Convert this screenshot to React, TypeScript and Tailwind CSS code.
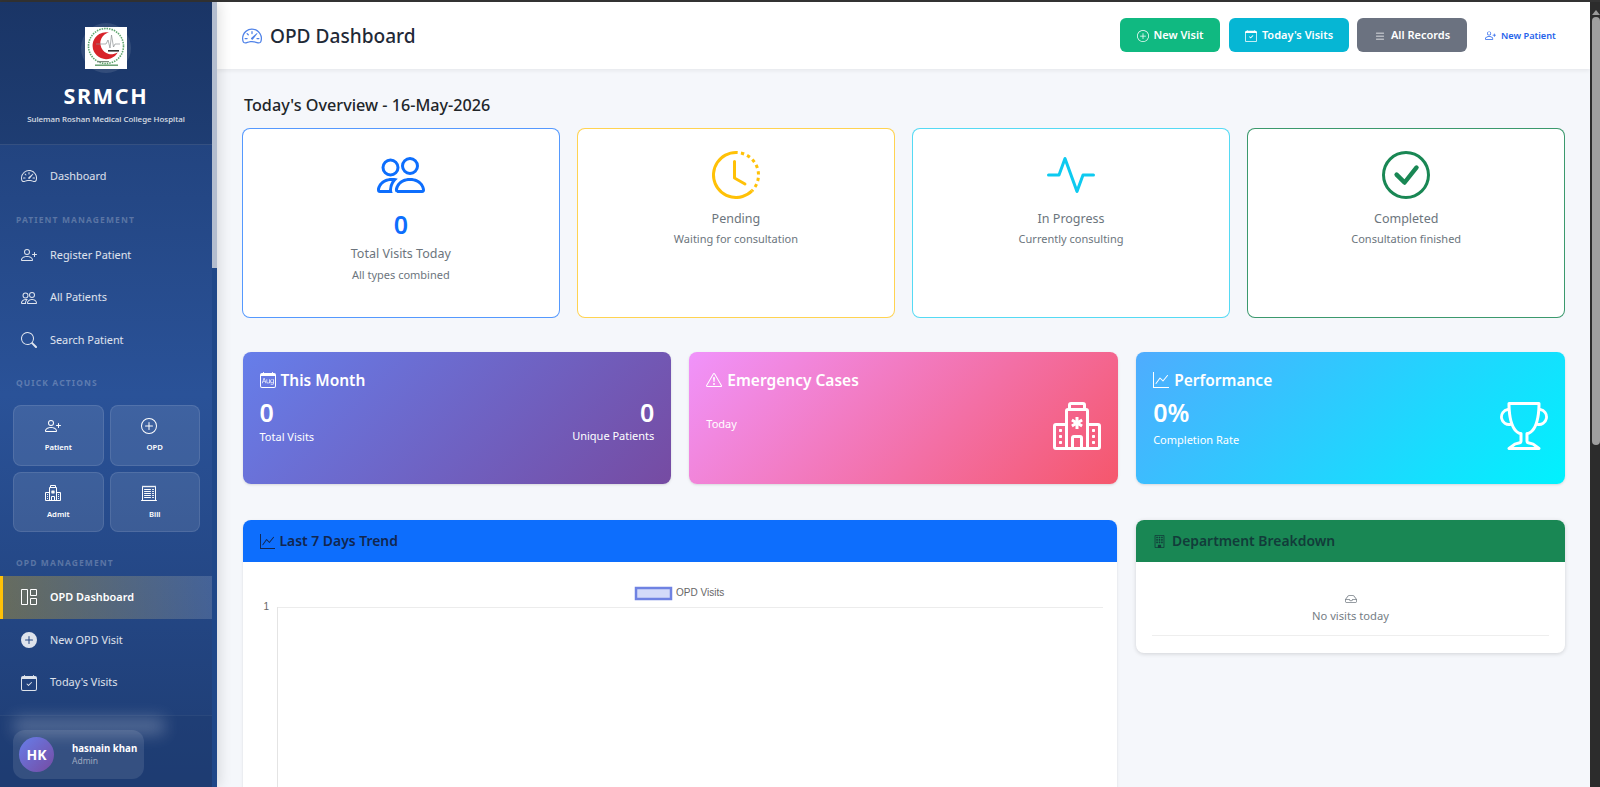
import React from "react";
import {
  BsSpeedometer2, BsPersonPlus, BsPeople, BsSearch, BsPlusCircle, BsPlusCircleFill, BsHospital, BsReceiptCutoff,
  BsGrid1X2, BsCalendarCheck, BsList, BsClockHistory, BsActivity, BsCheckCircle, BsCalendarMonth,
  BsExclamationTriangle, BsGraphUp, BsTrophy, BsBuilding, BsInbox,
} from "react-icons/bs";

function Logo() {
  return (
    <div className="w-[50px] h-[50px] rounded-full bg-white/10 flex items-center justify-center">
      <svg width="42" height="42" viewBox="0 0 42 42" className="bg-white">
        <circle cx="21" cy="19" r="17.5" fill="none" stroke="#5fa56e" strokeWidth="1.6" strokeDasharray="1.5 1" />
        <path d="M24 5.5A13.5 13.5 0 1 0 33 25A11 11 0 1 1 24 5.5Z" fill="#d8232a" />
        <path d="M11 17h10l2-4 2 8 1.5-13 2 12 1.5-3h5" fill="none" stroke="#8b8f92" strokeWidth="0.7" />
        <rect x="21" y="22" width="14" height="3.5" fill="#fff" />
        <rect x="23" y="23" width="11" height="1.6" fill="#333" />
        <rect x="12" y="34" width="12" height="1.2" fill="#7a8a7d" />
        <rect x="10" y="37.5" width="23" height="1.4" fill="#5e9a6a" />
      </svg>
    </div>
  );
}

function NavItem({ icon, label, active }: { icon: React.ReactNode; label: string; active?: boolean }) {
  return (
    <div
      className={
        active
          ? "h-[42.6px] flex items-center pl-[17.5px] border-l-[3px] border-[#ffc107] bg-[linear-gradient(90deg,rgba(255,193,7,0.3),rgba(255,255,255,0.15))] text-white font-semibold"
          : "h-[42.6px] flex items-center pl-[20.5px] text-white/85"
      }
    >
      <span className="w-[16px] flex justify-center text-[16px]">{icon}</span>
      <span className="ml-[13.5px] text-[10.9px]">{label}</span>
    </div>
  );
}

function SectionLabel({ children, className }: { children: React.ReactNode; className: string }) {
  return <div className={"pl-[16px] text-[8.5px] leading-[11px] font-bold tracking-[1.1px] text-white/25 " + className}>{children}</div>;
}

function Tile({ icon, label }: { icon: React.ReactNode; label: string }) {
  return (
    <div className="h-[60.5px] rounded-lg bg-white/10 border border-white/10 flex flex-col items-center pt-[11px] text-white">
      <span className="text-[16px] h-[18px] flex items-center mr-[11px]">{icon}</span>
      <span className="mt-[6px] text-[7.7px] font-semibold leading-[12px]">{label}</span>
    </div>
  );
}

function Sidebar() {
  return (
    <aside className="w-[217px] shrink-0 flex bg-[linear-gradient(180deg,#1e3c72_0%,#2a5298_50%,#1e3c72_100%)] shadow-[3px_0_12px_rgba(0,0,0,0.12)] z-10 h-full">
      <div className="w-[212px] flex flex-col h-full overflow-hidden">
        <div className="h-[143px] shrink-0 flex flex-col items-center pt-[21px] bg-black/10 border-b border-white/10">
          <Logo />
          <div className="mt-[9px] text-[21.5px] leading-[28px] font-bold tracking-[1.7px] text-white">SRMCH</div>
          <div className="mt-[3px] text-[7.9px] leading-[12px] font-medium text-white/85">Suleman Roshan Medical College Hospital</div>
        </div>
        <div className="pt-[9.7px]">
          <NavItem icon={<BsSpeedometer2 />} label="Dashboard" />
          <SectionLabel className="pt-[17px] pb-[8.4px]">PATIENT MANAGEMENT</SectionLabel>
          <NavItem icon={<BsPersonPlus />} label="Register Patient" />
          <NavItem icon={<BsPeople />} label="All Patients" />
          <NavItem icon={<BsSearch />} label="Search Patient" />
          <SectionLabel className="pt-[16px] pb-[16.6px]">QUICK ACTIONS</SectionLabel>
          <div className="grid grid-cols-2 gap-[6px] pl-[13px] pr-[12px]">
            <Tile icon={<BsPersonPlus />} label="Patient" />
            <Tile icon={<BsPlusCircle />} label="OPD" />
            <Tile icon={<BsHospital />} label="Admit" />
            <Tile icon={<BsReceiptCutoff />} label="Bill" />
          </div>
          <SectionLabel className="pt-[24.5px] pb-[8.5px]">OPD MANAGEMENT</SectionLabel>
          <NavItem icon={<BsGrid1X2 />} label="OPD Dashboard" active />
          <NavItem icon={<BsPlusCircleFill />} label="New OPD Visit" />
          <NavItem icon={<BsCalendarCheck />} label="Today's Visits" />
        </div>
        <div className="relative mt-auto h-[72px] shrink-0 bg-[#1e3c72]/50 border-t border-white/5 pt-[14px] pl-[13px]">
          <div className="absolute left-[14px] top-[2px] w-[150px] h-[16px] bg-white/25 blur-sm" />
          <div className="relative w-[131px] h-[49px] rounded-xl bg-white/10 flex items-center pl-[6px]">
            <div className="w-[35px] h-[35px] rounded-full bg-[linear-gradient(135deg,#667eea,#764ba2)] flex items-center justify-center text-white text-[14px] font-bold">HK</div>
            <div className="ml-[18px] -mt-[2px]">
              <div className="text-[9.7px] leading-[13px] font-bold text-white whitespace-nowrap">hasnain khan</div>
              <div className="text-[8.5px] leading-[11px] text-white/50">Admin</div>
            </div>
          </div>
        </div>
      </div>
      <div className="w-[5px] bg-[#1f4788] h-full">
        <div className="h-[266px] bg-[#b3bdcf]" />
      </div>
    </aside>
  );
}

function HeadBtn({ icon, label, className }: { icon: React.ReactNode; label: string; className: string }) {
  return (
    <div className={"h-[34px] pt-[1px] rounded-md flex items-center justify-center gap-[5px] text-white text-[11px] font-semibold " + className}>
      <span className="text-[12px]">{icon}</span>
      {label}
    </div>
  );
}

function Topbar() {
  return (
    <header className="h-[67px] shrink-0 bg-white shadow-[0_2px_4px_rgba(0,0,0,0.06)] flex items-center pl-[25px] pr-[10px] pb-[1px] z-[5] relative">
      <BsSpeedometer2 className="text-[20px] text-[#4f82e8] mt-[1px]" />
      <h1 className="ml-[8px] mt-[2px] text-[19.1px] font-medium text-[#1f2937]">OPD Dashboard</h1>
      <div className="ml-auto flex items-center">
        <HeadBtn className="w-[100px] bg-[#10b981]" icon={<BsPlusCircle />} label="New Visit" />
        <HeadBtn className="w-[120px] ml-[9px] bg-[#06b6d4]" icon={<BsCalendarCheck />} label="Today's Visits" />
        <HeadBtn className="w-[110px] ml-[8px] bg-[#6b7280]" icon={<BsList />} label="All Records" />
        <div className="w-[113px] pl-[18px] pt-[1px] flex items-center gap-[5px] text-[#2563eb] text-[9.2px] font-semibold">
          <BsPersonPlus className="text-[11px]" />
          New Patient
        </div>
      </div>
    </header>
  );
}

function StatCard({ border, color, icon, value, title, sub }: { border: string; color: string; icon: React.ReactNode; value?: string; title: string; sub: string }) {
  return (
    <div className={"h-[190px] rounded-lg bg-white border flex flex-col items-center pt-[22px] " + border}>
      <span className={"text-[48px] h-[48px] flex items-center " + color}>{icon}</span>
      {value && <div className={"mt-[7px] text-[25px] leading-[36px] font-semibold " + color}>{value}</div>}
      <div className={(value ? "mt-[2px]" : "mt-[10px]") + " text-[12.5px] leading-[20px] text-[#6c757d]"}>{title}</div>
      <div className={(value ? "mt-[3px]" : "mt-[2px]") + " text-[11px] leading-[16px] text-[#6c757d]"}>{sub}</div>
    </div>
  );
}

function GradCard({ gradient, icon, title, children }: { gradient: string; icon: React.ReactNode; title: string; children: React.ReactNode }) {
  return (
    <div className={"h-[132px] rounded-lg px-[17px] pt-[17px] text-white shadow-sm " + gradient}>
      <div className="flex items-center gap-[5px] text-[15.5px] leading-[22px] font-semibold">
        <span className="text-[16px]">{icon}</span>
        {title}
      </div>
      {children}
    </div>
  );
}

function Main() {
  return (
    <main className="flex-1 min-w-0 bg-[#f5f7fb] flex flex-col h-full overflow-hidden">
      <Topbar />
      <div className="pl-[25.5px] pr-[25px] pt-[24px]">
        <h2 className="pl-[1.5px] text-[16.2px] leading-[24px] font-medium text-[#212529] mb-[10.5px]">Today's Overview - 16-May-2026</h2>
        <div className="grid grid-cols-4 gap-[17.5px] mb-[34.5px] -ml-[0.5px]">
          <StatCard border="border-[#0d6efd]/70" color="text-[#0d6efd]" icon={<BsPeople />} value="0" title="Total Visits Today" sub="All types combined" />
          <StatCard border="border-[#ffc107]/70" color="text-[#ffc107]" icon={<BsClockHistory />} title="Pending" sub="Waiting for consultation" />
          <StatCard border="border-[#0dcaf0]/70" color="text-[#0dcaf0]" icon={<BsActivity />} title="In Progress" sub="Currently consulting" />
          <StatCard border="border-[#198754]/85" color="text-[#198754]" icon={<BsCheckCircle />} title="Completed" sub="Consultation finished" />
        </div>
        <div className="grid grid-cols-3 gap-[18px] mb-[36px]">
          <GradCard gradient="bg-[linear-gradient(135deg,#667eea,#764ba2)]" icon={<BsCalendarMonth />} title="This Month">
            <div className="flex justify-between mt-[4px]">
              <div>
                <div className="text-[25px] leading-[34px] font-semibold">0</div>
                <div className="text-[11px] leading-[16px]">Total Visits</div>
              </div>
              <div className="text-right">
                <div className="text-[25px] leading-[34px] font-semibold">0</div>
                <div className="-mt-[1px] text-[11px] leading-[16px]">Unique Patients</div>
              </div>
            </div>
          </GradCard>
          <GradCard gradient="bg-[linear-gradient(135deg,#f093fb,#f5576c)]" icon={<BsExclamationTriangle />} title="Emergency Cases">
            <div className="flex justify-between">
              <div className="mt-[25px] text-[11px] leading-[16px]">Today</div>
              <BsHospital className="mt-[11px] text-[48px]" />
            </div>
          </GradCard>
          <GradCard gradient="bg-[linear-gradient(135deg,#4facfe,#00f2fe)]" icon={<BsGraphUp />} title="Performance">
            <div className="flex justify-between">
              <div className="mt-[4px]">
                <div className="text-[25px] leading-[34px] font-semibold">0%</div>
                <div className="mt-[3px] text-[11px] leading-[16px]">Completion Rate</div>
              </div>
              <BsTrophy className="mt-[11px] text-[48px]" />
            </div>
          </GradCard>
        </div>
        <div className="grid grid-cols-[874.5px_1fr] gap-[19px] items-start">
          <section className="rounded-t-lg bg-white shadow-sm h-[300px] overflow-hidden">
            <div className="h-[42px] bg-[#0d6efd] flex items-center pl-[17px] gap-[5px] text-[13.9px] font-semibold text-[#12264f]">
              <BsGraphUp className="text-[15px]" />
              Last 7 Days Trend
            </div>
            <svg width="875" height="258" viewBox="0 0 875 258" className="block">
              <rect x="393" y="26" width="35" height="11" fill="#d3daf9" stroke="#6f82e2" strokeWidth="2.5" />
              <text x="433" y="33.5" fontFamily="'Liberation Sans', Arial, sans-serif" fontSize="10" fill="#666">OPD Visits</text>
              <text x="20.5" y="47.5" fontFamily="'Liberation Sans', Arial, sans-serif" fontSize="10" fill="#666">1</text>
              <line x1="34" x2="860" y1="45.5" y2="45.5" stroke="#ececec" />
              <line x1="34.5" x2="34.5" y1="45" y2="258" stroke="#e4e4e4" />
            </svg>
          </section>
          <section className="rounded-lg bg-white shadow-[0_1px_4px_rgba(0,0,0,0.15)] h-[133px] overflow-hidden">
            <div className="h-[42px] bg-[#198754] flex items-center pl-[17px] gap-[6px] text-[13.9px] font-semibold text-[#123c3a]">
              <BsBuilding className="text-[13px]" />
              Department Breakdown
            </div>
            <div className="mx-[16px] h-[74px] border-b border-[#eeeeee] flex flex-col items-center pt-[31px] text-[#757d85]">
              <BsInbox className="text-[12px]" />
              <div className="text-[11.2px] leading-[16px] mt-[3px]">No visits today</div>
            </div>
          </section>
        </div>
      </div>
    </main>
  );
}

function PageScrollbar() {
  return (
    <div className="w-[10px] shrink-0 bg-[#2c2c2c] h-full flex flex-col items-center pl-[1px]">
      <div className="mt-[8px] w-0 h-0 border-x-[4px] border-x-transparent border-b-[5px] border-b-[#9a9a9a]" />
      <div className="mt-[2px] w-[8px] h-[428px] rounded-full bg-[#9f9f9f]" />
    </div>
  );
}

export default function App() {
  return (
    <div className="h-[787px] w-full overflow-hidden flex flex-col bg-[#2c2c2c] font-['Noto_Sans',sans-serif]">
      <div className="h-[2px] shrink-0 bg-[#333333]" />
      <div className="flex-1 min-h-0 flex">
        <Sidebar />
        <Main />
        <PageScrollbar />
      </div>
    </div>
  );
}
